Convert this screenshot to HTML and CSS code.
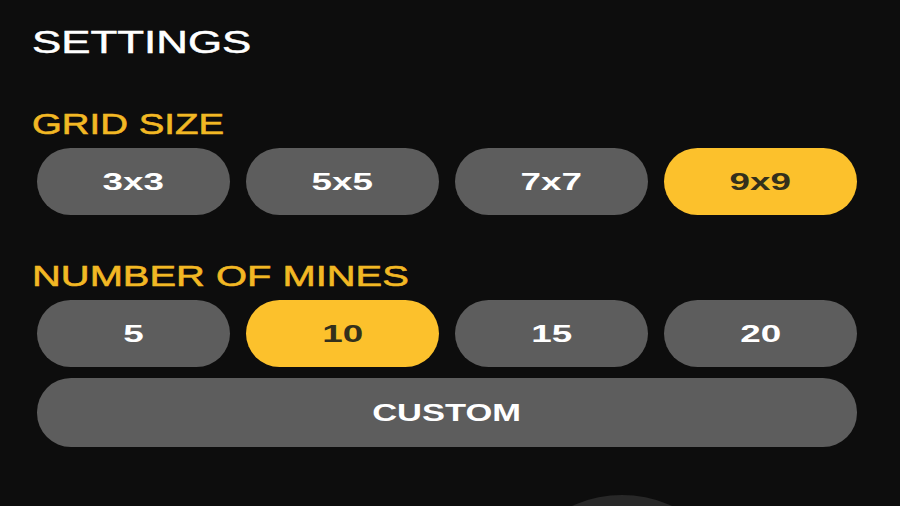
FILE: index.html
```html
<!DOCTYPE html>
<html lang="en">
<head>
<meta charset="utf-8">
<title>Settings</title>
<link rel="stylesheet" href="styles.css">
</head>
<body>
<main class="panel">
  <h1 class="title"><span class="wide-title">SETTINGS</span></h1>

  <h2 class="label label-grid"><span class="wide-label">GRID SIZE</span></h2>
  <div class="row">
    <button class="pill"><span class="wide-btn">3x3</span></button>
    <button class="pill"><span class="wide-btn">5x5</span></button>
    <button class="pill"><span class="wide-btn">7x7</span></button>
    <button class="pill active"><span class="wide-btn">9x9</span></button>
  </div>

  <h2 class="label label-mines"><span class="wide-label wide-mines">NUMBER OF MINES</span></h2>
  <div class="row">
    <button class="pill"><span class="wide-btn">5</span></button>
    <button class="pill active"><span class="wide-btn">10</span></button>
    <button class="pill"><span class="wide-btn">15</span></button>
    <button class="pill"><span class="wide-btn">20</span></button>
  </div>
  <button class="pill custom"><span class="wide-btn">CUSTOM</span></button>

  <div class="play-clip"><div class="play"></div></div>
</main>
</body>
</html>
```

FILE: styles.css
```css
html, body {
  margin: 0;
  padding: 0;
  width: 900px;
  height: 506px;
  overflow: hidden;
  background: #0d0d0d;
  font-family: "Liberation Sans", Arial, sans-serif;
}

.panel {
  padding: 26px 0 0 32px;
  display: flex;
  flex-direction: column;
  align-items: flex-start;
}

.title {
  margin: 0;
  font-size: 32px;
  line-height: 32px;
  font-weight: 400;
  color: #ffffff;
}

.wide-title {
  display: inline-block;
  transform: scaleX(1.37);
  transform-origin: left center;
  -webkit-text-stroke: 0.5px #ffffff;
}

.label {
  margin: 0;
  font-size: 30px;
  line-height: 30px;
  font-weight: 400;
  color: #f2b824;
}

.wide-label {
  display: inline-block;
  transform: scaleX(1.28);
  transform-origin: left center;
  -webkit-text-stroke: 0.6px #f2b824;
}

.wide-mines {
  transform: scaleX(1.33);
}

.label-grid {
  margin-top: 51px;
}

.label-mines {
  margin-top: 46px;
}

.row {
  margin: 9px 0 0 5px;
  width: 820px;
  display: grid;
  grid-template-columns: repeat(4, 1fr);
  column-gap: 16px;
}

.pill {
  height: 67px;
  border: 0;
  border-radius: 34px;
  background: #5d5d5d;
  color: #ffffff;
  font-family: "Liberation Sans", Arial, sans-serif;
  font-weight: 700;
  font-size: 23px;
  display: flex;
  align-items: center;
  justify-content: center;
  padding: 2px 0 0;
}

.pill.active {
  background: #fcc12c;
  color: #33301c;
}

.wide-btn {
  display: inline-block;
  transform: scaleX(1.6);
  transform-origin: center center;
}

.custom {
  margin: 11px 0 0 5px;
  width: 820px;
  height: 69px;
}

.custom .wide-btn {
  transform: scaleX(1.5);
}

.play-clip {
  margin: 48px 0 0 470px;
  width: 240px;
  height: 11px;
  overflow: hidden;
}

.play {
  width: 240px;
  height: 240px;
  border-radius: 50%;
  background: #282828;
}
```
